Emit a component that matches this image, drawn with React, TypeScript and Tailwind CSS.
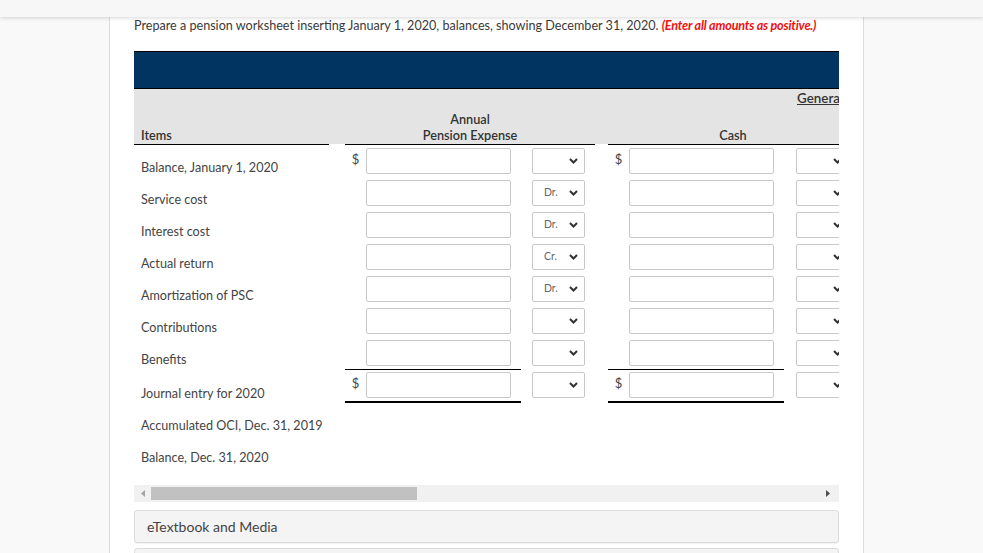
import React from "react";

type Row = {
  label: string;
  dollar?: boolean;
  sel?: string;
  total?: boolean;
  empty?: boolean;
};

const rows: Row[] = [
  { label: "Balance, January 1, 2020", dollar: true, sel: "" },
  { label: "Service cost", sel: "Dr." },
  { label: "Interest cost", sel: "Dr." },
  { label: "Actual return", sel: "Cr." },
  { label: "Amortization of PSC", sel: "Dr." },
  { label: "Contributions", sel: "" },
  { label: "Benefits", sel: "" },
  { label: "Journal entry for 2020", dollar: true, sel: "", total: true },
  { label: "Accumulated OCI, Dec. 31, 2019", empty: true },
  { label: "Balance, Dec. 31, 2020", empty: true },
];

function Chevron() {
  return (
    <svg width="9" height="6" viewBox="0 0 9 6" className="shrink-0">
      <path d="M1 1 L4.5 4.5 L8 1" fill="none" stroke="#333" strokeWidth="2" />
    </svg>
  );
}

function SelectBox({ value }: { value: string }) {
  return (
    <div className="w-[53px] h-[26px] border border-[#c9c9c9] rounded-[2px] bg-white flex items-center justify-between pl-[11px] pr-[6px]">
      <span className="text-[10.5px] text-[#666]">{value}</span>
      <Chevron />
    </div>
  );
}

function Amount({ dollar, total }: { dollar?: boolean; total?: boolean }) {
  return (
    <div
      className={
        "w-[176px] shrink-0 flex items-start " +
        (total ? "border-t border-b-2 border-black pt-[2px]" : "pt-[3px]")
      }
    >
      <div className="w-[21px] h-[26px] text-center text-[13px] leading-[22px] text-[#444]">
        {dollar ? "$" : ""}
      </div>
      <input
        className="w-[145px] h-[26px] border border-[#c9c9c9] rounded-[2px] bg-white outline-none"
        readOnly
      />
    </div>
  );
}

function SelCell({ value, pl }: { value: string; pl: string }) {
  return (
    <div className={"w-[74px] shrink-0 pt-[3px] " + pl}>
      <SelectBox value={value} />
    </div>
  );
}

export default function App() {
  return (
    <div className="w-[983px] h-[553px] overflow-hidden bg-[#f9f9f9] font-['Lato',sans-serif] text-[#333]">
      <div className="relative z-10 h-[17px] bg-[#f7f7f7] shadow-[0_1px_4px_rgba(0,0,0,0.16)]" />
      <div className="ml-[109px] w-[755px] h-[536px] border-x border-[#dcdcdc] bg-white px-[24px]">
        <div className="h-[34px] pt-[1px] text-[12.6px] leading-[16px] text-[#3a3a3a] whitespace-nowrap">
          Prepare a pension worksheet inserting January 1, 2020, balances, showing December 31, 2020.{" "}
          <span className="font-bold italic text-[#f01010] tracking-[-0.2px]">(Enter all amounts as positive.)</span>
        </div>

        <div className="w-[705px] overflow-hidden">
          <div className="w-[1200px]">
            <div className="h-[38px] bg-[#013461] border-y border-black" />
            <div className="bg-[#e4e4e4] w-[1200px]">
              <div className="h-[18px] text-[13.4px] leading-[18px] font-semibold pl-[663px] whitespace-nowrap">
                <span className="underline">General Journal Entry</span>
              </div>
              <div className="h-[38px] flex items-stretch text-[12.7px] leading-[16px] font-semibold">
                <div className="w-[195px] shrink-0 border-b border-black flex items-end pl-[7px] pb-[1px]">
                  Items
                </div>
                <div className="w-[16px] shrink-0 border-b border-white" />
                <div className="w-[250px] shrink-0 border-b border-black flex flex-col justify-end items-center pb-[1px]">
                  <div>Annual</div>
                  <div>Pension Expense</div>
                </div>
                <div className="w-[13px] shrink-0 border-b border-white" />
                <div className="w-[250px] shrink-0 border-b border-black flex flex-col justify-end items-center pb-[1px]">
                  <div>Cash</div>
                </div>
                <div className="w-[13px] shrink-0 border-b border-white" />
                <div className="w-[250px] shrink-0 border-b border-black" />
              </div>
            </div>

            {rows.map((r, i) => (
              <div
                key={i}
                className={"flex items-stretch " + (r.total ? "h-[34px]" : "h-[32px]")}
              >
                <div className="w-[195px] shrink-0 flex items-end pl-[7px] pb-[1px] text-[12.6px] leading-[16px] text-[#444] whitespace-nowrap">
                  {r.label}
                </div>
                <div className="w-[16px] shrink-0" />
                {!r.empty && (
                  <>
                    <Amount dollar={r.dollar} total={r.total} />
                    <SelCell value={r.sel ?? ""} pl="pl-[11px]" />
                    <div className="w-[13px] shrink-0" />
                    <Amount dollar={r.dollar} total={r.total} />
                    <SelCell value="" pl="pl-[12px]" />
                  </>
                )}
              </div>
            ))}
          </div>
        </div>

        <div className="mt-[18px] w-[705px] h-[17px] bg-[#f1f1f1] flex items-center">
          <div className="w-[17px] h-[17px] flex items-center justify-center">
            <svg width="4" height="7" viewBox="0 0 4 7">
              <path d="M4 0 L0 3.5 L4 7 Z" fill="#a3a3a3" />
            </svg>
          </div>
          <div className="w-[266px] h-[13px] bg-[#c1c1c1]" />
          <div className="flex-1" />
          <div className="w-[17px] h-[17px] flex items-center justify-center mr-[3px]">
            <svg width="4" height="7" viewBox="0 0 4 7">
              <path d="M0 0 L4 3.5 L0 7 Z" fill="#505050" />
            </svg>
          </div>
        </div>

        <div className="mt-[8px] w-[705px] h-[33px] bg-[#f4f4f4] border border-[#dcdcdc] rounded-[3px] shadow-[0_1px_1px_rgba(0,0,0,0.05)] flex items-center pl-[12px] text-[14px] text-[#444]">
          eTextbook and Media
        </div>
        <div className="mt-[5px] w-[705px] h-[33px] bg-[#f4f4f4] border border-[#dcdcdc] rounded-[3px]" />
      </div>
    </div>
  );
}
